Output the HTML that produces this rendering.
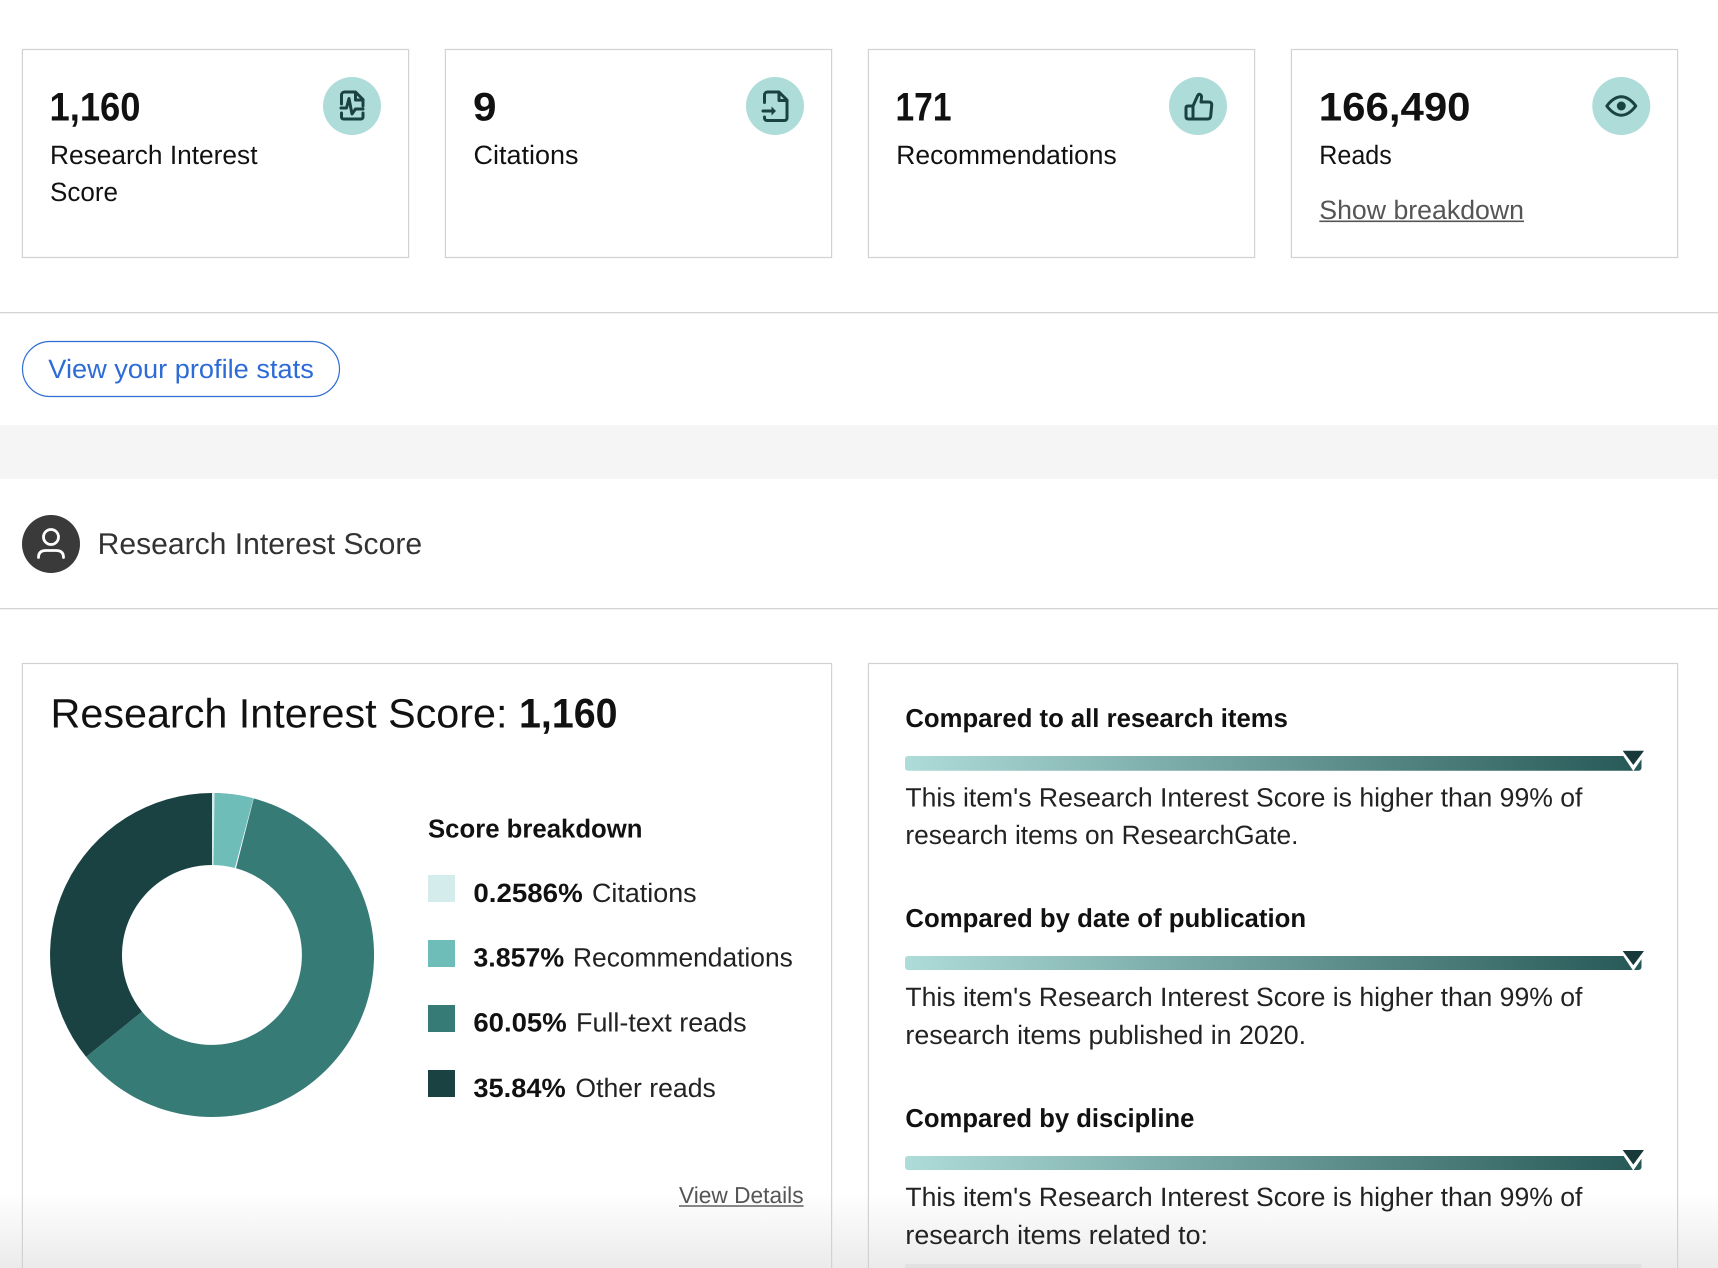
<!DOCTYPE html>
<html lang="en">
<head>
<meta charset="utf-8">
<title>Research Interest Score</title>
<style>
html,body{margin:0;padding:0;background:#fff;width:1718px;height:1268px;overflow:hidden}
svg{display:block}
text{font-family:"Liberation Sans",sans-serif;fill:#111;text-rendering:geometricPrecision}
.n{font-size:40px;font-weight:700}
.b{font-size:26.5px}
.h{font-size:26px;font-weight:700}
.l{font-size:26.5px;font-weight:700}
.card{fill:none;stroke:#d2d2d2;stroke-width:1.2}
.ic{fill:none;stroke:#1b4242;stroke-width:3;stroke-linecap:round;stroke-linejoin:round}
</style>
</head>
<body>
<svg width="1718" height="1268" viewBox="0 0 1718 1268" xmlns="http://www.w3.org/2000/svg">
<defs>
<linearGradient id="g" x1="0" x2="1" y1="0" y2="0"><stop offset="0" stop-color="#aedcd9"/><stop offset="1" stop-color="#255856"/></linearGradient>
<linearGradient id="f" x1="0" x2="0" y1="0" y2="1"><stop offset="0" stop-color="#ebebeb" stop-opacity="0"/><stop offset="1" stop-color="#ebebeb" stop-opacity="1"/></linearGradient>
</defs>
<rect width="1718" height="1268" fill="#fff"/>

<!-- bottom fade sits behind content -->
<rect x="0" y="1192" width="1718" height="76" fill="url(#f)"/>

<!-- stat cards -->
<rect class="card" x="22.4" y="49.5" width="386.2" height="208"/>
<rect class="card" x="445.4" y="49.5" width="386.2" height="208"/>
<rect class="card" x="868.4" y="49.5" width="386.2" height="208"/>
<rect class="card" x="1291.4" y="49.5" width="386.2" height="208"/>

<text class="n" x="49.5" y="120.5" textLength="91" lengthAdjust="spacingAndGlyphs">1,160</text>
<text class="b" x="50" y="164" textLength="207.5" lengthAdjust="spacingAndGlyphs">Research Interest</text>
<text class="b" x="50" y="200.8" textLength="68" lengthAdjust="spacingAndGlyphs">Score</text>

<text class="n" x="473" y="120.5" textLength="23.5" lengthAdjust="spacingAndGlyphs">9</text>
<text class="b" x="473.5" y="164" textLength="105" lengthAdjust="spacingAndGlyphs">Citations</text>

<text class="n" x="895.5" y="120.5" textLength="56" lengthAdjust="spacingAndGlyphs">171</text>
<text class="b" x="896.3" y="164" textLength="220.4" lengthAdjust="spacingAndGlyphs">Recommendations</text>

<text class="n" x="1318.8" y="120.5" textLength="151.7" lengthAdjust="spacingAndGlyphs">166,490</text>
<text class="b" x="1319.3" y="164" textLength="72.5" lengthAdjust="spacingAndGlyphs">Reads</text>
<text class="b" x="1319.3" y="219" textLength="204.7" lengthAdjust="spacingAndGlyphs" style="fill:#555">Show breakdown</text>
<rect x="1319.3" y="220.5" width="204.7" height="1.6" fill="#555"/>

<!-- icon circles -->
<circle cx="352" cy="106" r="29" fill="#aedcd9"/>
<circle cx="775" cy="106" r="29" fill="#aedcd9"/>
<circle cx="1198" cy="106" r="29" fill="#aedcd9"/>
<circle cx="1621.3" cy="106" r="29" fill="#aedcd9"/>

<g transform="translate(352 106)" class="ic">
<path d="M-10.5 -2V-11a3 3 0 0 1 3-3H3.5L11 -6.5V0"/>
<path d="M3.5 -13.5V-6H10.5"/>
<path d="M-11 2H-5.5L-3 -7.5L0 8L3.5 3H11"/>
<path d="M-10.5 7V11a2 2 0 0 0 2 2H9a2 2 0 0 0 2-2V7"/>
</g>
<g transform="translate(775 106)" class="ic">
<path d="M-10.5 -3.5V-11a3 3 0 0 1 3-3H4L12 -6V12a2.5 2.5 0 0 1-2.5 2.5H-8a2.5 2.5 0 0 1-2.5-2.5V11"/>
<path d="M4 -13.5V-5.5H11.5"/>
<path d="M-12 5H-3"/>
<path d="M-3.5 0.5L1 5L-3.5 9.5Z" fill="#1b4242" stroke="none"/>
</g>
<g transform="translate(1198 106)" class="ic">
<path d="M-5 0L-0.5 -10Q0.5 -12.5 2.2 -11.5Q3.8 -10.5 3.5 -8.5L3 -4H10.5Q14 -4 13.7 -0.8L12.7 10Q12.4 13 9.5 13H-9.5Q-12 13 -12 10.5V2Q-12 0 -10 0H-5V13"/>
</g>
<g transform="translate(1621.3 106)" class="ic">
<path d="M-14.5 0Q-7.5 -9.2 0 -9.2Q7.5 -9.2 14.5 0Q7.5 9.2 0 9.2Q-7.5 9.2 -14.5 0Z"/>
<circle cx="0" cy="0" r="4.5" fill="#1b4242" stroke="none"/>
</g>

<!-- divider + button -->
<rect x="0" y="312" width="1718" height="1.3" fill="#d4d4d4"/>
<rect x="22.5" y="341.5" width="317" height="55" rx="27.5" fill="#fff" stroke="#2f6ed3" stroke-width="1.2"/>
<text class="b" x="48.3" y="378" textLength="265.5" lengthAdjust="spacingAndGlyphs" style="fill:#2d6bd6">View your profile stats</text>

<rect x="0" y="425" width="1718" height="54" fill="#f5f5f5"/>

<!-- section head -->
<circle cx="51" cy="544" r="29" fill="#3a3a3a"/>
<g transform="translate(51 544)" fill="none" stroke="#fff" stroke-width="2.8" stroke-linecap="round">
<circle cx="0" cy="-7" r="7.5"/>
<path d="M-12.5 13.5Q-12.5 6.5 -5 6.5H5Q12.5 6.5 12.5 13.5"/>
</g>
<text x="97.6" y="553.8" font-size="30" textLength="324.5" lengthAdjust="spacingAndGlyphs" style="fill:#333">Research Interest Score</text>
<rect x="0" y="608" width="1718" height="1.3" fill="#d4d4d4"/>

<!-- lower cards -->
<rect class="card" x="22.4" y="663.5" width="809.2" height="640"/>
<rect class="card" x="868.4" y="663.5" width="809.2" height="640"/>

<!-- left card -->
<text x="50.5" y="727.5" font-size="41" textLength="457" lengthAdjust="spacingAndGlyphs">Research Interest Score:</text>
<text x="519" y="727.5" font-size="41.5" font-weight="700" textLength="98.5" lengthAdjust="spacingAndGlyphs">1,160</text>

<!-- donut: center 212,955 R162 r90 -->
<path d="M212 793A162 162 0 1 1 86.1 1056.9L142 1011.6A90 90 0 1 0 236 868.2L253.7 798.5Z" fill="#377b77"/>
<path d="M212 793A162 162 0 0 1 253.4 798.4L234.9 868A90 90 0 0 0 212 865Z" fill="#6fbdb9"/>
<path d="M212 793A162 162 0 0 1 214.6 793L213.5 865A90 90 0 0 0 212 865Z" fill="#d5ecec"/>
<path d="M86.1 1056.9A162 162 0 0 1 212 793V865A90 90 0 0 0 142 1011.6Z" fill="#1b4242"/>

<text class="h" x="428" y="837.6" textLength="214.5" lengthAdjust="spacingAndGlyphs">Score breakdown</text>

<rect x="428" y="875" width="27" height="27" fill="#d5ecec"/>
<rect x="428" y="940" width="27" height="27" fill="#6fbdb9"/>
<rect x="428" y="1005" width="27" height="27" fill="#377b77"/>
<rect x="428" y="1070" width="27" height="27" fill="#1b4242"/>

<text class="l" x="473.4" y="901.8" textLength="109.3" lengthAdjust="spacingAndGlyphs">0.2586%</text>
<text class="b" x="592" y="901.8" textLength="104.6" lengthAdjust="spacingAndGlyphs" style="fill:#222">Citations</text>
<text class="l" x="473.4" y="966.7" textLength="90.8" lengthAdjust="spacingAndGlyphs">3.857%</text>
<text class="b" x="573" y="966.7" textLength="219.8" lengthAdjust="spacingAndGlyphs" style="fill:#222">Recommendations</text>
<text class="l" x="473.4" y="1031.5" textLength="93.3" lengthAdjust="spacingAndGlyphs">60.05%</text>
<text class="b" x="576" y="1031.5" textLength="170.6" lengthAdjust="spacingAndGlyphs" style="fill:#222">Full-text reads</text>
<text class="l" x="473.4" y="1096.8" textLength="92.3" lengthAdjust="spacingAndGlyphs">35.84%</text>
<text class="b" x="575.4" y="1096.8" textLength="140.4" lengthAdjust="spacingAndGlyphs" style="fill:#222">Other reads</text>

<text x="679" y="1203" font-size="23" textLength="124.6" lengthAdjust="spacingAndGlyphs" style="fill:#555">View Details</text>
<rect x="679" y="1205.3" width="124.6" height="1.4" fill="#555"/>

<!-- right card -->
<text class="h" x="905.4" y="726.8" textLength="382.5" lengthAdjust="spacingAndGlyphs">Compared to all research items</text>
<rect x="905" y="756" width="736.5" height="14.7" rx="3" fill="url(#g)"/>
<path d="M1622 754H1645L1633.3 771Z" fill="#fff"/>
<path d="M1622.7 750.7H1644L1633.3 765Z" fill="#17393a"/>
<text class="b" x="905.4" y="806.5" textLength="677" lengthAdjust="spacingAndGlyphs" style="fill:#222">This item's Research Interest Score is higher than 99% of</text>
<text class="b" x="905.4" y="844" textLength="393" lengthAdjust="spacingAndGlyphs" style="fill:#222">research items on ResearchGate.</text>

<text class="h" x="905.4" y="927" textLength="400.7" lengthAdjust="spacingAndGlyphs">Compared by date of publication</text>
<rect x="905" y="956" width="736.5" height="14" rx="3" fill="url(#g)"/>
<path d="M1622 954H1645L1633.3 971Z" fill="#fff"/>
<path d="M1622.7 951H1644L1633.3 965.3Z" fill="#17393a"/>
<text class="b" x="905.4" y="1005.8" textLength="677" lengthAdjust="spacingAndGlyphs" style="fill:#222">This item's Research Interest Score is higher than 99% of</text>
<text class="b" x="905.4" y="1043.8" textLength="400.7" lengthAdjust="spacingAndGlyphs" style="fill:#222">research items published in 2020.</text>

<text class="h" x="905.4" y="1126.8" textLength="289" lengthAdjust="spacingAndGlyphs">Compared by discipline</text>
<rect x="905" y="1156" width="736.5" height="14" rx="3" fill="url(#g)"/>
<path d="M1622 1153.5H1645L1633.3 1170.5Z" fill="#fff"/>
<path d="M1622.7 1150H1644L1633.3 1164.5Z" fill="#17393a"/>
<text class="b" x="905.4" y="1206" textLength="677" lengthAdjust="spacingAndGlyphs" style="fill:#222">This item's Research Interest Score is higher than 99% of</text>
<text class="b" x="905.4" y="1244" textLength="302.6" lengthAdjust="spacingAndGlyphs" style="fill:#222">research items related to:</text>
<rect x="905" y="1264" width="736.5" height="6" fill="#e2e2e2"/>
</svg>
</body>
</html>
